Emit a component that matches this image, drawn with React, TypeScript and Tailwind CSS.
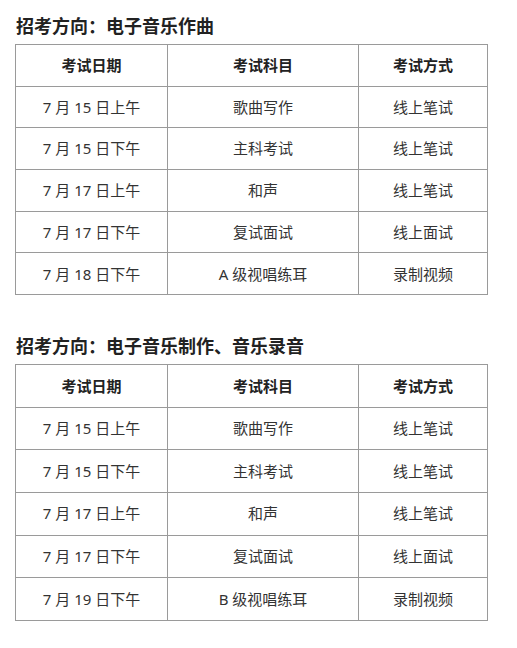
const HEAD = ['考试日期', '考试科目', '考试方式'];

const SECTIONS: { title: string; rowH: string; rows: string[][] }[] = [
  {
    title: '招考方向：电子音乐作曲',
    rowH: 'h-[41.7px]',
    rows: [
      ['7 月 15 日上午', '歌曲写作', '线上笔试'],
      ['7 月 15 日下午', '主科考试', '线上笔试'],
      ['7 月 17 日上午', '和声', '线上笔试'],
      ['7 月 17 日下午', '复试面试', '线上面试'],
      ['7 月 18 日下午', 'A 级视唱练耳', '录制视频'],
    ],
  },
  {
    title: '招考方向：电子音乐制作、音乐录音',
    rowH: 'h-[42.6px]',
    rows: [
      ['7 月 15 日上午', '歌曲写作', '线上笔试'],
      ['7 月 15 日下午', '主科考试', '线上笔试'],
      ['7 月 17 日上午', '和声', '线上笔试'],
      ['7 月 17 日下午', '复试面试', '线上面试'],
      ['7 月 19 日下午', 'B 级视唱练耳', '录制视频'],
    ],
  },
];

const COLS = ['w-[152px]', 'w-[191px]', 'w-[129px]'];

function Schedule({ title, rowH, rows }: (typeof SECTIONS)[number]) {
  return (
    <section>
      <h2 className="pl-[1px] text-[18px] font-bold leading-[26px] text-[#222]">{title}</h2>
      <table className="mt-[5px] w-[472px] table-fixed border-collapse text-[15px] text-[#333]">
        <colgroup>
          {COLS.map((c) => (
            <col key={c} className={c} />
          ))}
        </colgroup>
        <thead>
          <tr className={rowH}>
            {HEAD.map((h) => (
              <th key={h} className="border border-[#9a9a9a] p-0 text-center font-bold text-[#222]">
                {h}
              </th>
            ))}
          </tr>
        </thead>
        <tbody>
          {rows.map((r, i) => (
            <tr key={i} className={rowH}>
              {r.map((cell, j) => (
                <td key={j} className="border border-[#9a9a9a] p-0 text-center">
                  {cell}
                </td>
              ))}
            </tr>
          ))}
        </tbody>
      </table>
    </section>
  );
}

export default function App() {
  return (
    <div
      className="min-h-[648px] w-[517px] bg-white pl-[15px] pt-[13px]"
      style={{ fontFamily: '"Noto Sans", "Noto Sans CJK SC", sans-serif' }}
    >
      <div className="flex flex-col gap-[38px]">
        {SECTIONS.map((s) => (
          <Schedule key={s.title} {...s} />
        ))}
      </div>
    </div>
  );
}
